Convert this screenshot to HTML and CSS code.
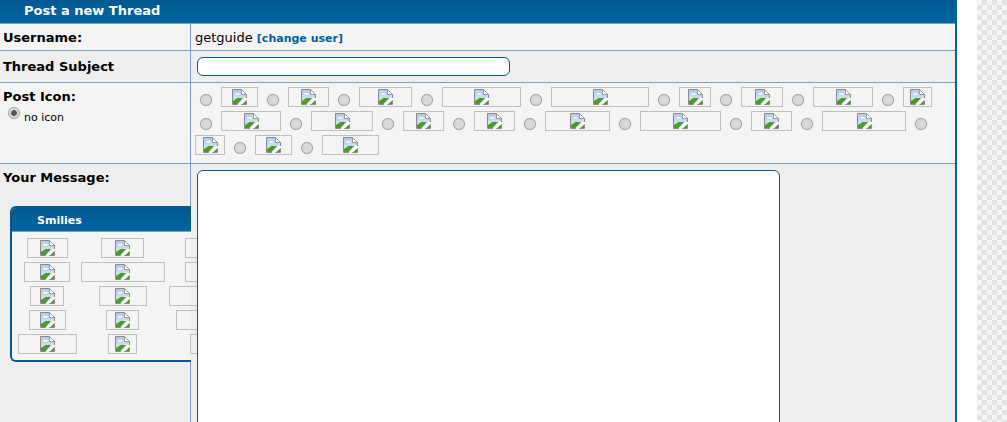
FILE: index.html
```html
<!DOCTYPE html>
<html lang="en">
<head>
  <meta charset="UTF-8" />
  <title>Post a new Thread</title>
  <link rel="stylesheet" href="styles.css">
</head>
<body>

  <!-- broken image icon, reused by every post icon and smilie -->
  <svg class="defs" width="0" height="0">
    <defs>
      <linearGradient id="sky" x1="0" y1="0" x2="0" y2="1">
        <stop offset="0" stop-color="#b4c9ee" />
        <stop offset="1" stop-color="#e4ebfa" />
      </linearGradient>
      <symbol id="broken" viewBox="0 0 15 16">
        <path d="M.5 .5H9.500L14.500 5.500V15.500H.5Z" fill="url(#sky)" stroke="#8a8a8a" />
        <path d="M9.500 .5V5.500H14.500Z" fill="#fff" stroke="#9a9a9a" />
        <path d="M3 5.500Q3.500 3.500 5.500 4Q7.500 3.500 8 5.500Z" fill="#fff" />
        <path d="M1 15V12L5.500 9H11L5.500 15Z" fill="#4a9c22" />
        <path d="M5.500 16L12 9H15V11L8.500 16Z" fill="#fff" />
        <path d="M10.500 15L14 11.500V15Z" fill="#4a9c22" />
      </symbol>
    </defs>
  </svg>

  <form class="forum">
    <div class="title">Post a new Thread</div>

    <div class="row row-user">
      <div class="label">Username:</div>
      <div class="field">getguide <a class="change" href="#">[change user]</a></div>
    </div>

    <div class="row row-subject">
      <div class="label">Thread Subject</div>
      <div class="field"><input class="subject" type="text" /></div>
    </div>

    <div class="row row-icons">
      <div class="label">
        Post Icon:
        <label class="noicon"><input class="radio" type="radio" name="icon" checked />no icon</label>
      </div>
      <div class="icons">
        <input class="radio" type="radio" name="icon" /><span class="pic w37"><svg><use href="#broken" /></svg></span>
        <input class="radio" type="radio" name="icon" /><span class="pic w41"><svg><use href="#broken" /></svg></span>
        <input class="radio" type="radio" name="icon" /><span class="pic w53"><svg><use href="#broken" /></svg></span>
        <input class="radio" type="radio" name="icon" /><span class="pic w79"><svg><use href="#broken" /></svg></span>
        <input class="radio" type="radio" name="icon" /><span class="pic w98"><svg><use href="#broken" /></svg></span>
        <input class="radio" type="radio" name="icon" /><span class="pic w32"><svg><use href="#broken" /></svg></span>
        <input class="radio" type="radio" name="icon" /><span class="pic w42"><svg><use href="#broken" /></svg></span>
        <input class="radio" type="radio" name="icon" /><span class="pic w60"><svg><use href="#broken" /></svg></span>
        <input class="radio" type="radio" name="icon" /><span class="pic w29"><svg><use href="#broken" /></svg></span>
        <input class="radio" type="radio" name="icon" /><span class="pic w60"><svg><use href="#broken" /></svg></span>
        <input class="radio" type="radio" name="icon" /><span class="pic w62"><svg><use href="#broken" /></svg></span>
        <input class="radio" type="radio" name="icon" /><span class="pic w41"><svg><use href="#broken" /></svg></span>
        <input class="radio" type="radio" name="icon" /><span class="pic w41"><svg><use href="#broken" /></svg></span>
        <input class="radio" type="radio" name="icon" /><span class="pic w65"><svg><use href="#broken" /></svg></span>
        <input class="radio" type="radio" name="icon" /><span class="pic w81"><svg><use href="#broken" /></svg></span>
        <input class="radio" type="radio" name="icon" /><span class="pic w41"><svg><use href="#broken" /></svg></span>
        <input class="radio" type="radio" name="icon" /><span class="pic w84"><svg><use href="#broken" /></svg></span>
        <input class="radio" type="radio" name="icon" /><span class="pic w30"><svg><use href="#broken" /></svg></span>
        <input class="radio" type="radio" name="icon" /><span class="pic w37"><svg><use href="#broken" /></svg></span>
        <input class="radio" type="radio" name="icon" /><span class="pic w57"><svg><use href="#broken" /></svg></span>
      </div>
    </div>

    <div class="row row-message">
      <div class="label">
        Your Message:
        <div class="smilies">
          <div class="smilies-head">Smilies</div>
          <div class="smilies-grid">
            <span class="pic w41"><svg><use href="#broken" /></svg></span>
            <span class="pic w43"><svg><use href="#broken" /></svg></span>
            <span class="pic w44"><svg><use href="#broken" /></svg></span>
            <span class="pic w46"><svg><use href="#broken" /></svg></span>
            <span class="pic w84"><svg><use href="#broken" /></svg></span>
            <span class="pic w44"><svg><use href="#broken" /></svg></span>
            <span class="pic w34"><svg><use href="#broken" /></svg></span>
            <span class="pic w48"><svg><use href="#broken" /></svg></span>
            <span class="pic w76"><svg><use href="#broken" /></svg></span>
            <span class="pic w37"><svg><use href="#broken" /></svg></span>
            <span class="pic w33"><svg><use href="#broken" /></svg></span>
            <span class="pic w62"><svg><use href="#broken" /></svg></span>
            <span class="pic w59"><svg><use href="#broken" /></svg></span>
            <span class="pic w29"><svg><use href="#broken" /></svg></span>
            <span class="pic w34"><svg><use href="#broken" /></svg></span>
          </div>
        </div>
      </div>
      <div class="field"><textarea class="message"></textarea></div>
    </div>
  </form>

  <div class="spacer"></div>
  <div class="checker"></div>

</body>
</html>
```

FILE: styles.css
```css
html, body {
  height: 100%;
  overflow: hidden;
}
body {
  margin: 0;
  display: flex;
  background: white;
  font-family: "DejaVu Sans", Verdana, sans-serif;
  color: black;
}
.defs {
  position: absolute;
}
.forum {
  width: 957px;
  height: 100vh;
  overflow: hidden;
  flex: none;
  box-sizing: border-box;
  border-right: 2px solid #0063a3;
}
.spacer {
  width: 20px;
  flex: none;
}
.checker {
  flex: 1;
  background: conic-gradient(#e2e2e2 25%, #f4f4f4 0 50%, #e2e2e2 0 75%, #f4f4f4 0) 0 0 / 10px 10px;
}
.title {
  height: 23px;
  padding-left: 24px;
  background: linear-gradient(#00598f, #0065a6);
  color: white;
  font-size: 13px;
  font-weight: bold;
  line-height: 22px;
}

/* form rows */
.row {
  display: grid;
  grid-template-columns: 191px 1fr;
  border-top: 1px solid #7f9fc6;
  background: #f4f4f4;
}
.row-user {
  height: 26px;
}
.row-subject {
  height: 31px;
  background: #eeeeee;
}
.row-icons {
  height: 80px;
}
.row-message {
  height: 300px;
  background: #eeeeee;
}
.label {
  box-sizing: border-box;
  padding-left: 3px;
  border-right: 1px solid #7f9fc6;
  font-size: 13px;
  font-weight: bold;
}
.row-user .label {
  line-height: 28px;
}
.row-subject .label {
  line-height: 31px;
}
.row-icons .label, .row-message .label {
  padding-top: 6px;
  line-height: 16px;
}
.field {
  padding-left: 4px;
  font-size: 13px;
}
.row-user .field {
  line-height: 28px;
}
.change {
  color: #00619e;
  font-size: 11px;
  font-weight: bold;
  text-decoration: none;
}
.subject {
  display: block;
  box-sizing: border-box;
  width: 313px;
  height: 19px;
  margin: 6px 0 0 2px;
  border: 1px solid #005a8f;
  border-radius: 6px;
  background: white;
  outline: none;
}
.message {
  display: block;
  position: relative;
  z-index: 1;
  box-sizing: border-box;
  width: 583px;
  height: 400px;
  margin: 6px 0 0 2px;
  border: 1px solid #005a8f;
  border-radius: 6px;
  background: white;
  resize: none;
  outline: none;
}

/* post icons */
.radio {
  appearance: none;
  box-sizing: border-box;
  width: 12px;
  height: 12px;
  margin: 7px 5px 0;
  border: 1px solid #a8a8a8;
  border-radius: 50%;
  background: #d8d8d8;
  box-shadow: 0 0 1px #b4b4b4;
}
.radio:checked {
  background: radial-gradient(circle, #555 0 2.500px, #d8d8d8 3.200px);
}
.noicon {
  display: flex;
  align-items: flex-start;
  gap: 4px;
  margin: 2px 0 0 5px;
  font-size: 11px;
  font-weight: normal;
  line-height: 22px;
}
.noicon .radio {
  margin: 0;
}
.icons {
  display: flex;
  flex-wrap: wrap;
  align-items: flex-start;
  align-content: flex-start;
  gap: 4px;
  padding: 4px 5px 0 4px;
}
.pic {
  display: flex;
  justify-content: center;
  align-items: center;
  flex: none;
  box-sizing: border-box;
  height: 20px;
  border: 1px solid #c0c0c0;
}
.pic svg {
  width: 15px;
  height: 16px;
}
.w29 { width: 29px; }
.w30 { width: 30px; }
.w32 { width: 32px; }
.w33 { width: 33px; }
.w34 { width: 34px; }
.w37 { width: 37px; }
.w41 { width: 41px; }
.w42 { width: 42px; }
.w43 { width: 43px; }
.w44 { width: 44px; }
.w46 { width: 46px; }
.w48 { width: 48px; }
.w53 { width: 53px; }
.w57 { width: 57px; }
.w59 { width: 59px; }
.w60 { width: 60px; }
.w62 { width: 62px; }
.w65 { width: 65px; }
.w76 { width: 76px; }
.w79 { width: 79px; }
.w81 { width: 81px; }
.w84 { width: 84px; }
.w98 { width: 98px; }

/* smilies box, sticks out over the column line */
.smilies {
  position: relative;
  box-sizing: border-box;
  width: 181px;
  height: 156px;
  margin: 20px 0 0 7px;
  border: 2px solid #005a8f;
  border-right: none;
  border-radius: 6px 0 0 6px;
  background: #f4f4f4;
}
.smilies-head {
  height: 24px;
  padding-left: 25px;
  border-bottom: 1px solid #7f9fc6;
  border-radius: 4px 0 0 0;
  box-sizing: border-box;
  background: linear-gradient(#00598f, #0065a6);
  color: white;
  font-size: 11px;
  line-height: 26px;
}
.smilies-grid {
  display: grid;
  grid-template-columns: repeat(3, auto);
  justify-content: start;
  justify-items: center;
  gap: 4px;
  padding: 6px 0 0 5.500px;
}
```
